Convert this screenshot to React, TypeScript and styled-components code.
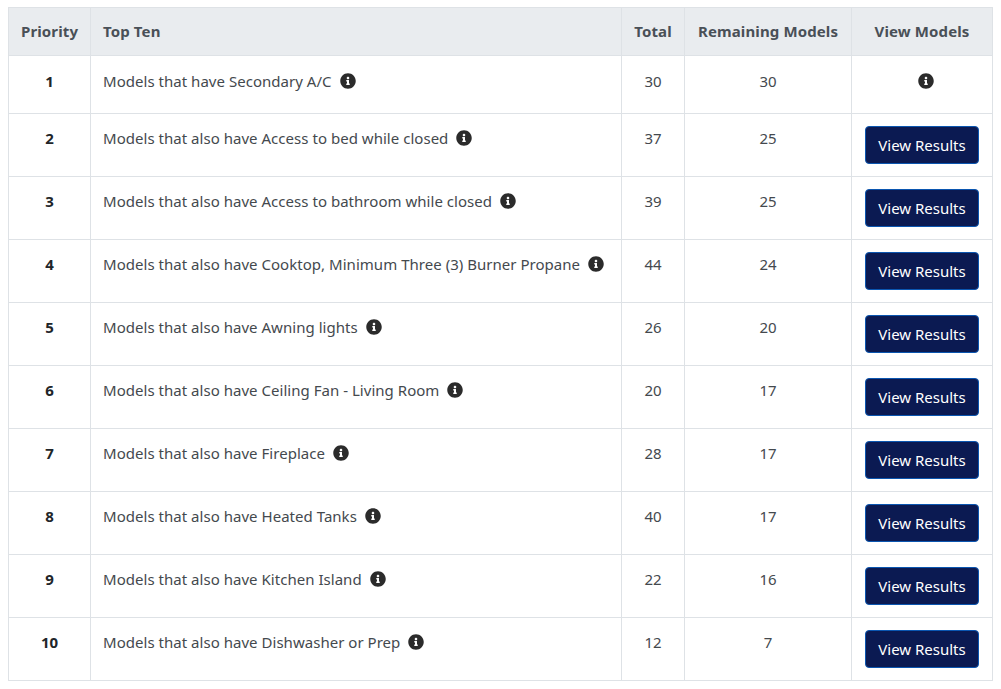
import React from "react";
import styled, { createGlobalStyle } from "styled-components";

const Global = createGlobalStyle`
  html, body { margin: 0; padding: 0; background: #fff; }
  body { font-family: "Noto Sans", "Open Sans", sans-serif; font-size: 15px; line-height: 24px; color: #212529; }
`;

const Page = styled.div`
  padding: 7px 8px 0 8px;
  width: 1001px;
  box-sizing: border-box;
`;

const Table = styled.table`
  width: 984px;
  table-layout: fixed;
  border-collapse: collapse;
`;

const Head = styled.th<{ $left?: boolean }>`
  height: 48px;
  padding: 0 12px 2px;
  background: #e9ecef;
  color: #495057;
  font-weight: 700;
  font-size: 15px;
  letter-spacing: 0.12px;
  text-align: ${(p) => (p.$left ? "left" : "center")};
  border: 1px solid #dee2e6;
  box-sizing: border-box;
  white-space: nowrap;
`;

const Cell = styled.td<{ $left?: boolean; $bold?: boolean; $first?: boolean }>`
  padding: ${(p) => (p.$first ? 13 : 12)}px 12px 12px;
  vertical-align: top;
  text-align: ${(p) => (p.$left ? "left" : "center")};
  font-weight: ${(p) => (p.$bold ? 700 : 400)};
  letter-spacing: 0.03px;
  color: ${(p) => (p.$bold ? "#212529" : "#44494e")};
  border: 1px solid #dee2e6;
  box-sizing: border-box;
  white-space: nowrap;
`;

const Row = styled.tr<{ $first?: boolean }>`
  height: ${(p) => (p.$first ? 58 : 63)}px;
`;

const Info = styled.svg`
  width: 16px;
  height: 16px;
  margin-left: 8px;
  fill: #2b2b2b;
  vertical-align: -2px;
`;

const ResultButton = styled.button`
  display: block;
  margin: 0 0 0 1px;
  width: 114px;
  height: 38px;
  padding: 0;
  background: #0b1a52;
  border: 1px solid #0b56b0;
  border-radius: 4px;
  color: #fff;
  font-family: inherit;
  font-size: 15px;
  line-height: 24px;
`;

const InfoIcon = () => (
  <Info viewBox="0 0 512 512" aria-hidden="true">
    <path d="M256 8C119 8 8 119 8 256s111 248 248 248 248-111 248-248S393 8 256 8zm0 110c23.196 0 42 18.804 42 42s-18.804 42-42 42-42-18.804-42-42 18.804-42 42-42zm56 254c0 6.627-5.373 12-12 12h-88c-6.627 0-12-5.373-12-12v-24c0-6.627 5.373-12 12-12h12v-64h-12c-6.627 0-12-5.373-12-12v-24c0-6.627 5.373-12 12-12h64c6.627 0 12 5.373 12 12v100h12c6.627 0 12 5.373 12 12v24z" />
  </Info>
);

const rows = [
  ["Models that have Secondary A/C", 30, 30],
  ["Models that also have Access to bed while closed", 37, 25],
  ["Models that also have Access to bathroom while closed", 39, 25],
  ["Models that also have Cooktop, Minimum Three (3) Burner Propane", 44, 24],
  ["Models that also have Awning lights", 26, 20],
  ["Models that also have Ceiling Fan - Living Room", 20, 17],
  ["Models that also have Fireplace", 28, 17],
  ["Models that also have Heated Tanks", 40, 17],
  ["Models that also have Kitchen Island", 22, 16],
  ["Models that also have Dishwasher or Prep", 12, 7],
] as const;

export default function App() {
  return (
    <Page>
      <Global />
      <Table>
        <colgroup>
          <col width={82} />
          <col width={531} />
          <col width={63} />
          <col width={167} />
          <col width={141} />
        </colgroup>
        <thead>
          <tr>
            <Head>Priority</Head>
            <Head $left>Top Ten</Head>
            <Head>Total</Head>
            <Head>Remaining Models</Head>
            <Head>View Models</Head>
          </tr>
        </thead>
        <tbody>
          {rows.map(([label, total, remaining], i) => (
            <Row key={label} $first={i === 0}>
              <Cell $bold $first={i === 0}>{i + 1}</Cell>
              <Cell $left $first={i === 0}>
                {label}
                <InfoIcon />
              </Cell>
              <Cell $first={i === 0}>{total}</Cell>
              <Cell $first={i === 0}>{remaining}</Cell>
              <Cell $first={i === 0}>{i === 0 ? <InfoIcon /> : <ResultButton>View Results</ResultButton>}</Cell>
            </Row>
          ))}
        </tbody>
      </Table>
    </Page>
  );
}
